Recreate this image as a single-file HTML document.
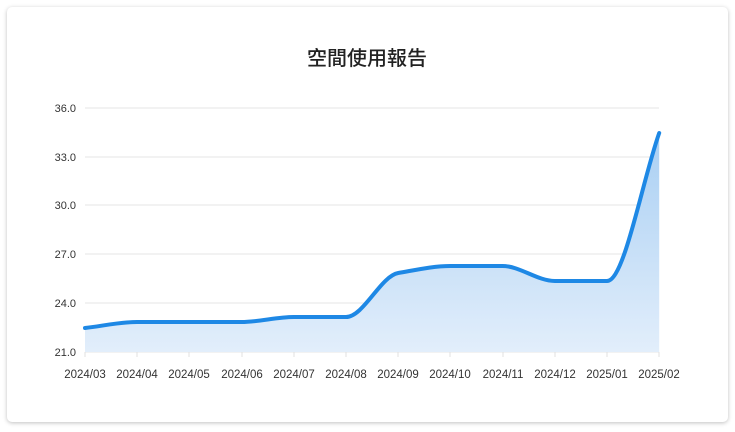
<!DOCTYPE html>
<html><head><meta charset="utf-8"><style>
body{margin:0;background:#fff;width:735px;height:432px;overflow:hidden;font-family:"Liberation Sans","Noto Sans CJK TC",sans-serif}
.card{position:absolute;left:7px;top:7px;width:721px;height:415px;background:#fff;border-radius:5px;box-shadow:0 1px 4px rgba(0,0,0,.25)}
</style></head><body>
<div class="card"></div>
<svg width="735" height="432" style="position:absolute;left:0;top:0" font-family="Liberation Sans, Noto Sans CJK TC, sans-serif">
<defs><linearGradient id="g" x1="0" y1="133" x2="0" y2="352" gradientUnits="userSpaceOnUse"><stop offset="0" stop-color="#a9cff3"/><stop offset="1" stop-color="#e2eefb"/></linearGradient></defs>
<text x="367" y="65" text-anchor="middle" font-size="20" font-weight="500" fill="#222" font-family="Noto Sans CJK TC, sans-serif">空間使用報告</text>
<g stroke="#e5e5e5" stroke-width="1">
<line x1="85" y1="108" x2="659" y2="108"/><line x1="85" y1="157" x2="659" y2="157"/><line x1="85" y1="205" x2="659" y2="205"/><line x1="85" y1="254" x2="659" y2="254"/><line x1="85" y1="303" x2="659" y2="303"/><line x1="85" y1="352" x2="659" y2="352"/>
</g>
<g stroke="#e0e0e0"><line x1="85" y1="352" x2="85" y2="357"/><line x1="137" y1="352" x2="137" y2="357"/><line x1="189" y1="352" x2="189" y2="357"/><line x1="242" y1="352" x2="242" y2="357"/><line x1="294" y1="352" x2="294" y2="357"/><line x1="346" y1="352" x2="346" y2="357"/><line x1="398" y1="352" x2="398" y2="357"/><line x1="450" y1="352" x2="450" y2="357"/><line x1="503" y1="352" x2="503" y2="357"/><line x1="555" y1="352" x2="555" y2="357"/><line x1="607" y1="352" x2="607" y2="357"/><line x1="659" y1="352" x2="659" y2="357"/></g>
<g font-size="11" fill="#333" text-anchor="end">
<text x="76" y="112">36.0</text><text x="76" y="161">33.0</text><text x="76" y="209">30.0</text><text x="76" y="258">27.0</text><text x="76" y="307">24.0</text><text x="76" y="356">21.0</text>
</g>
<g font-size="11.5" fill="#333" text-anchor="middle">
<text x="85" y="378">2024/03</text><text x="137" y="378">2024/04</text><text x="189" y="378">2024/05</text><text x="242" y="378">2024/06</text><text x="294" y="378">2024/07</text><text x="346" y="378">2024/08</text><text x="398" y="378">2024/09</text><text x="450" y="378">2024/10</text><text x="503" y="378">2024/11</text><text x="555" y="378">2024/12</text><text x="607" y="378">2025/01</text><text x="659" y="378">2025/02</text>
</g>
<path d="M85,328 C102.4,326 119.8,322 137.2,322 C154.6,322 172,322 189.4,322 C206.8,322 224.2,322 241.6,322 C259,322 276.4,317 293.8,317 C311.2,317 328.6,317 346,317 C363.4,317 380.8,276 398.2,273 C415.6,270 433,266 450.4,266 C467.8,266 485.2,266 502.6,266 C520,266 537.4,281 554.8,281 C572.2,281 589.6,281 607,281 C624.4,281 641.8,182.4 659.2,133 L659.2,352 L85,352 Z" fill="url(#g)"/>
<path d="M85,328 C102.4,326 119.8,322 137.2,322 C154.6,322 172,322 189.4,322 C206.8,322 224.2,322 241.6,322 C259,322 276.4,317 293.8,317 C311.2,317 328.6,317 346,317 C363.4,317 380.8,276 398.2,273 C415.6,270 433,266 450.4,266 C467.8,266 485.2,266 502.6,266 C520,266 537.4,281 554.8,281 C572.2,281 589.6,281 607,281 C624.4,281 641.8,182.4 659.2,133" fill="none" stroke="#1e88e5" stroke-width="4" stroke-linecap="round"/>
</svg>
</body></html>
